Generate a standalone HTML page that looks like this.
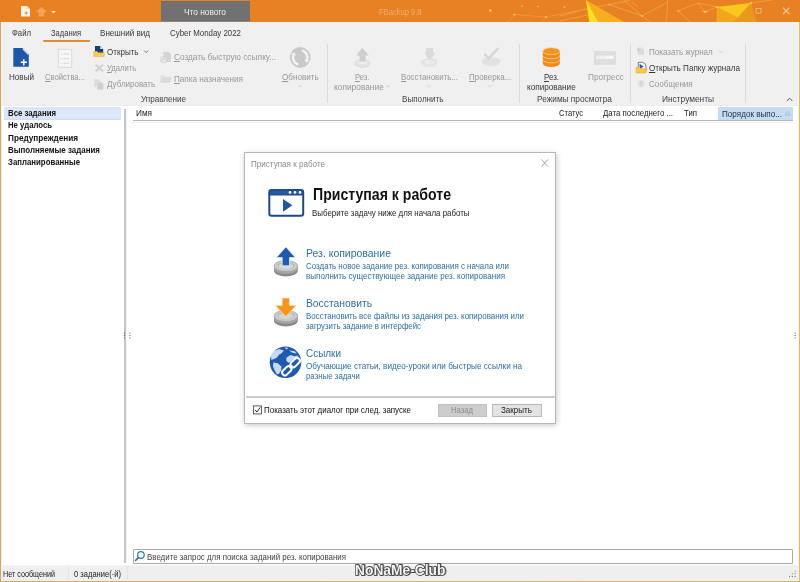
<!DOCTYPE html>
<html><head><meta charset="utf-8">
<style>
html,body{margin:0;padding:0;}
body{width:800px;height:582px;overflow:hidden;background:#fff;position:relative;font-family:"Liberation Sans",sans-serif;font-size:10px;color:#222;}
.a{position:absolute;}
.t{position:absolute;white-space:nowrap;transform-origin:0 50%;}
svg{position:absolute;overflow:visible;}
u{text-decoration:underline;text-underline-offset:1px;text-decoration-thickness:0.8px;}
</style></head><body>
<!-- TITLE BAR -->
<div class="a" style="left:0;top:0;width:800px;height:22px;background:#E78123;"></div>
<svg style="left:0;top:0" width="800" height="22" viewBox="0 0 800 22">
 <g fill="none" stroke="#F7AE52" stroke-width="0.7" opacity="0.9">
  <path d="M514.4 14.5 L508 22 M514.4 14.5 L546 17 L586 9 M546 17 L541 22" opacity="0.7"/>
  <path d="M560 16 L586 9 L612 4 L630 0.5"/>
  <path d="M560 21 L588 15"/>
  <path d="M609 4.5 L642 16 L668 2"/>
  <path d="M624 0 L642 16 L650 22"/>
  <path d="M668 0 L666 22"/>
  <path d="M632 2 L638 7"/>
  <path d="M678 11 L698 3 L717 7"/>
  <path d="M678 11 L690 22"/>
  <path d="M698 3 L705 12 L717 7"/>
  <path d="M751 3 L772 0"/>
 </g>
 <polygon points="586,0 624,22 589,22" fill="#F6AE1F"/>
 <polygon points="586,0 598,22 589.5,22" fill="#FCDF22"/>
 <polygon points="717,7 751,3 756,22 716.5,22" fill="#F3A51F"/>
 <polygon points="717,7 751,3 738,17.5" fill="#F8C81E"/>
 <polygon points="738,17.5 751,3 756,22 733,22" fill="#EA981E"/>
 <g fill="#F9D15B">
  <circle cx="490.4" cy="10.5" r="1.2"/><circle cx="717" cy="7" r="1"/><circle cx="751" cy="3" r="1.1"/>
  <circle cx="642" cy="16" r="0.9"/><circle cx="705" cy="12" r="0.9"/><circle cx="564.5" cy="7" r="0.8"/>
  <circle cx="522" cy="6" r="0.8"/><circle cx="538" cy="6.5" r="0.8"/><circle cx="514.4" cy="14.5" r="0.9"/><circle cx="546" cy="17" r="0.9"/>
  <circle cx="609" cy="4.5" r="0.7"/><circle cx="678" cy="11" r="0.7"/>
 </g>
 <!-- window controls -->
 <g fill="none" stroke="#F5CDA3" stroke-width="0.9">
  <rect x="756" y="8.5" width="5" height="4.5" opacity="0.75"/>
  <path d="M783 7.7 L789.4 14.1 M789.4 7.7 L783 14.1" stroke-width="1.1"/>
  <path d="M702 11.5 H708" opacity="0.5"/>
 </g>
 <!-- quick access icons -->
 <path d="M21 6 H27 L30 9 V16.5 H21 Z" fill="#FBF3DC"/>
 <path d="M27 6 V9 H30 Z" fill="#EAD9B0"/>
 <path d="M26.2 11.5 v3 M24.7 13 h3" stroke="#8a8470" stroke-width="0.8" fill="none"/>
 <path d="M41.5 6.8 L47.2 12.3 H44.3 V16.4 H38.7 V12.3 H35.8 Z" fill="#F4A25A"/>
 <path d="M51 11 H56 L53.5 13.5 Z" fill="#FBE3C3"/>
</svg>
<div class="a" style="left:161px;top:1.4px;width:89px;height:20.6px;background:#717171;"></div>
<!-- RIBBON BG -->
<div class="a" style="left:0;top:21.6px;width:800px;height:84.4px;background:#F0F0F0;"></div>
<div class="a" style="left:0;top:21.6px;width:800px;height:0.9px;background:#FAF1E6;"></div>
<div class="a" style="left:0;top:104.5px;width:800px;height:1.5px;background:linear-gradient(#F0F0F0,#E9E9E9);"></div>
<div class="a" style="left:161px;top:21px;width:89px;height:1.2px;background:#868686;"></div>
<div class="a" style="left:42.7px;top:39.8px;width:47.7px;height:1.9px;background:#E58A34;border-radius:1px;"></div>
<!-- group separators -->
<div class="a" style="left:326.5px;top:44px;width:1px;height:59px;background:#DADADA;"></div>
<div class="a" style="left:519px;top:44px;width:1px;height:59px;background:#DADADA;"></div>
<div class="a" style="left:630px;top:44px;width:1px;height:59px;background:#DADADA;"></div>
<div class="a" style="left:745px;top:44px;width:1px;height:59px;background:#DADADA;"></div>
<svg style="left:0;top:0" width="800" height="582" viewBox="0 0 800 582">
 <!-- Новый -->
 <path d="M13.3 48 H22.6 L28.8 54.2 V66.8 H13.3 Z" fill="#1F57A6"/>
 <path d="M23 49.2 L27.9 54.1" stroke="#DCE6F4" stroke-width="1.1" stroke-linecap="round"/>
 <path d="M23.8 59.2 V65.4 M20.7 62.3 H26.9" stroke="#fff" stroke-width="1.5" fill="none"/>
 <g fill="#4C7BC0"><circle cx="14.9" cy="51" r="0.45"/><circle cx="14.9" cy="56" r="0.45"/><circle cx="14.9" cy="61" r="0.45"/><circle cx="14.9" cy="65" r="0.45"/></g>
 <!-- Свойства -->
 <rect x="58.3" y="49.3" width="13.4" height="18" fill="#F6F6F6" stroke="#D8D8D8" stroke-width="0.9"/>
 <g stroke="#D4D4D4" stroke-width="0.9" fill="none">
  <path d="M60.6 54 h1.6 M63.6 54 h5.6 M60.6 58.6 h1.6 M63.6 58.6 h5.6 M60.6 63.2 h1.6 M63.6 63.2 h5.6"/>
 </g>
 <!-- Открыть -->
 <path d="M95 46 H100.3 L103.2 48.9 V53 H95 Z" fill="#1B3E72"/>
 <path d="M100.3 46 L103.2 48.9 H100.3 Z" fill="#E9EEF5"/>
 <path d="M93.8 51.6 H97.2 L98.4 52.7 H104.3 V56.5 H93.8 Z" fill="#F6CC5B" stroke="#E2B13C" stroke-width="0.5"/>
 <path d="M144.2 50.6 L146.2 52.6 L148.2 50.6" stroke="#6a6a6a" stroke-width="0.9" fill="none"/>
 <!-- Удалить -->
 <path d="M95.6 64.8 L103 71.4 M103 64.8 L95.6 71.4" stroke="#D2D2D2" stroke-width="2.2" fill="none"/>
 <!-- Дублировать -->
 <path d="M94.2 79.2 H98.6 L100.4 81 V87 H94.2 Z" fill="#DCDCDC"/>
 <path d="M97 81.8 H101.2 L103.7 84.3 V89.7 H97 Z" fill="#D0D0D0" stroke="#F1F1F1" stroke-width="0.5"/>
 <!-- Создать быструю ссылку -->
 <path d="M163.5 51.7 H168.6 L171 54.1 V62 H163.5 Z" fill="#D5D5D5"/>
 <rect x="161" y="57" width="5.2" height="5.2" fill="#E9E9E9" stroke="#D0D0D0" stroke-width="0.7"/>
 <path d="M162.3 61 C162.4 59.2 163.2 58.6 164.8 58.6 M164 57.8 l0.9 0.8 l-0.9 0.8" stroke="#bdbdbd" stroke-width="0.6" fill="none"/>
 <!-- Папка назначения -->
 <path d="M160.3 75 H164.2 L165.3 76.2 H170 V82.8 H160.3 Z" fill="#E3E3E3"/>
 <path d="M161.8 77.8 H171.6 L170 82.8 H160.3 Z" fill="#DADADA"/>
 <!-- Обновить -->
 <circle cx="300.2" cy="57.5" r="10.4" fill="#C9C9C9"/>
 <g fill="none" stroke="#F3F3F3" stroke-width="2.6">
  <path d="M302.06 50.55 A7.2 7.2 0 0 1 306.97 59.96"/>
  <path d="M298.34 64.45 A7.2 7.2 0 0 1 293.43 55.04"/>
 </g>
 <path d="M306.01 62.59 L309.69 60.95 L304.24 58.97 Z" fill="#F3F3F3"/>
 <path d="M294.39 52.41 L290.71 54.05 L296.16 56.03 Z" fill="#F3F3F3"/>
 <path d="M298 85.2 L300 87 L302 85.2" stroke="#CFCFCF" stroke-width="0.8" fill="none"/>
 <!-- Рез. копирование (disabled) -->
 <ellipse cx="362.3" cy="63.4" rx="7.4" ry="3.7" fill="#E6E6E6" stroke="#DADADA" stroke-width="1.1"/>
 <ellipse cx="362.3" cy="62.4" rx="5.2" ry="2.3" fill="#EDEDED" stroke="#DEDEDE" stroke-width="0.8"/>
 <path d="M362.3 47.8 L368.9 55.5 H365.6 V61.4 H359.5 V55.5 H356 Z" fill="#CECECE"/>
 <path d="M386.2 85.2 L388.2 87 L390.2 85.2" stroke="#C4C4C4" stroke-width="0.8" fill="none"/>
 <!-- Восстановить (disabled) -->
 <ellipse cx="429.4" cy="63" rx="8.2" ry="4.5" fill="#E7E7E7"/>
 <ellipse cx="429.4" cy="62" rx="8.2" ry="4" fill="#E2E2E2"/>
 <ellipse cx="429.4" cy="62" rx="5.6" ry="2.4" fill="#EAEAEA"/>
 <path d="M426.2 48 H433 V52.5 H435.8 L429.7 60.7 L424 52.5 H426.2 Z" fill="#DADADA"/>
 <path d="M426.8 85.2 L428.8 87 L430.8 85.2" stroke="#D2D2D2" stroke-width="0.8" fill="none"/>
 <!-- Проверка (disabled) -->
 <ellipse cx="491" cy="62.4" rx="9.2" ry="4.2" fill="#E6E6E6"/>
 <ellipse cx="491" cy="61.2" rx="9.2" ry="4" fill="#E1E1E1"/>
 <path d="M484.4 54 L488.6 58.4 L498.4 48.2" stroke="#D6D6D6" stroke-width="2.4" fill="none"/>
 <path d="M487.8 85.2 L489.8 87 L491.8 85.2" stroke="#D2D2D2" stroke-width="0.8" fill="none"/>
 <!-- Рез. копирование (db orange) -->
 <g>
  <path d="M542.8 51.2 V63.6 A8.5 3.5 0 0 0 559.8 63.6 V51.2 Z" fill="#EF8A1B"/>
  <path d="M542.8 55.6 A8.5 3.2 0 0 0 559.8 55.6" stroke="#F9C88C" stroke-width="0.9" fill="none"/>
  <path d="M542.8 59.7 A8.5 3.2 0 0 0 559.8 59.7" stroke="#F9C88C" stroke-width="0.9" fill="none"/>
  <ellipse cx="551.3" cy="51.2" rx="8.5" ry="3.5" fill="#F7941E" stroke="#FBD3A0" stroke-width="0.8"/>
 </g>
 <!-- Прогресс -->
 <rect x="594" y="51" width="22" height="13.8" fill="#DEDEDE"/>
 <rect x="596" y="55.6" width="18" height="3.4" fill="#EFEFEF"/>
 <rect x="607" y="56.2" width="5.5" height="2.2" fill="#FAFAFA"/>
 <!-- Показать журнал -->
 <path d="M638 47.6 H642 L644 49.6 V55 H638 Z" fill="#DDDDDD"/>
 <path d="M636.2 50 L638.4 47.6 L640.6 50 H639.2 V52.4 H637.6 V50 Z" fill="#CFCFCF"/>
 <path d="M719.2 50.8 L721.1 52.6 L723 50.8" stroke="#C8C8C8" stroke-width="0.8" fill="none"/>
 <!-- Открыть папку журнала -->
 <path d="M638.3 62.3 H642.4 Q646 62.8 646 66.6 V70 H638.3 Z" fill="#fff" stroke="#5a5a5a" stroke-width="0.8"/>
 <path d="M639.6 63.8 L643.6 66.6 L639.6 69.4 Z" fill="#2E5FA5"/>
 <path d="M636.1 67.6 H639.8 L640.9 68.7 H646.9 L646 73 H636.1 Z" fill="#F6C944" stroke="#E5AE35" stroke-width="0.6"/>
 <!-- Сообщения -->
 <circle cx="641.1" cy="83.6" r="3.7" fill="#E1E1E1"/>
 <path d="M641.1 81.4 V84.3" stroke="#BEBEBE" stroke-width="0.9"/>
 <circle cx="641.1" cy="85.7" r="0.5" fill="#BEBEBE"/>
 <!-- collapse chevron -->
 <path d="M786.8 101 L789.6 98.2 L792.4 101" stroke="#5a5a5a" stroke-width="1" fill="none"/>
</svg>

<!-- MAIN -->
<div class="a" style="left:0;top:106px;width:800px;height:459px;background:#fff;"></div>
<!-- left panel selection -->
<div class="a" style="left:4px;top:107px;width:117px;height:12.6px;background:#DBE7F9;border-bottom:1px solid #CFDDF0;box-sizing:border-box;"></div>
<!-- left panel right border / splitter -->
<div class="a" style="left:124.4px;top:109px;width:1.3px;height:454px;background:#C6C6C6;"></div>
<div class="a" style="left:125.7px;top:109px;width:1.4px;height:454px;background:#F5F5F5;"></div>
<svg style="left:0;top:0" width="800" height="582" viewBox="0 0 800 582">
 <g fill="#555"><rect x="124.1" y="332.6" width="1" height="1"/><rect x="124.1" y="335" width="1" height="1"/><rect x="124.1" y="337.4" width="1" height="1"/>
 <rect x="129.4" y="332.6" width="1" height="1"/><rect x="129.4" y="335" width="1" height="1"/><rect x="129.4" y="337.4" width="1" height="1"/>
 <rect x="794.6" y="332.6" width="1" height="1"/><rect x="794.6" y="335" width="1" height="1"/><rect x="794.6" y="337.4" width="1" height="1"/></g>
</svg>
<!-- list header -->
<div class="a" style="left:717.5px;top:107px;width:75px;height:13.4px;background:#C6DDF1;"></div>
<div class="a" style="left:133px;top:120.2px;width:659.5px;height:1px;background:#B4B4B4;"></div>
<div class="a" style="left:133px;top:122.4px;width:659.5px;height:0.6px;background:#EFEFEF;"></div>
<svg style="left:0;top:0" width="800" height="582" viewBox="0 0 800 582">
 <path d="M787.5 111.2 L790 115.2 H785 Z" fill="none" stroke="#9DB4CD" stroke-width="0.7"/>
 <!-- search magnifier -->
 <circle cx="140.9" cy="555" r="3.3" fill="#F4FAFD" stroke="#337CA3" stroke-width="1.2"/>
 <path d="M138.4 557.6 L135.5 560.5" stroke="#2B6C8F" stroke-width="1.6" stroke-linecap="round"/>
 <!-- resize grip -->
 <g fill="#9a9a9a"><rect x="795" y="571" width="1" height="1"/><rect x="795" y="574" width="1" height="1"/><rect x="792" y="574" width="1" height="1"/><rect x="795" y="577" width="1" height="1"/><rect x="792" y="577" width="1" height="1"/><rect x="789" y="577" width="1" height="1"/></g>
</svg>
<!-- search box -->
<div class="a" style="left:132.5px;top:549.1px;width:660px;height:14.7px;border:1.2px solid #A9A9A9;box-sizing:border-box;border-radius:1px;"></div>

<!-- STATUS -->
<div class="a" style="left:0;top:564.6px;width:800px;height:17.4px;background:#EFEFEF;"></div>
<div class="a" style="left:0;top:564.6px;width:800px;height:1.4px;background:linear-gradient(#F8F8F8,#EFEFEF);"></div>
<!-- DIALOG -->
<div class="a" style="left:244.2px;top:152px;width:311.8px;height:271.8px;background:#fff;border:1.4px solid #B7B7B7;box-sizing:border-box;box-shadow:1px 1.5px 5px rgba(0,0,0,0.17), 0 0 8px rgba(0,0,0,0.06);"></div>
<div class="a" style="left:245.6px;top:396.3px;width:309px;height:1.3px;background:#CCCCCC;"></div>
<!-- buttons -->
<div class="a" style="left:437.5px;top:403.9px;width:49.5px;height:12.8px;background:#CDCDCD;border:1px solid #C0C0C0;box-sizing:border-box;"></div>
<div class="a" style="left:492px;top:403.9px;width:49.6px;height:12.8px;background:#E3E3E3;border:1px solid #B9B9B9;box-sizing:border-box;"></div>
<svg style="left:0;top:0" width="800" height="582" viewBox="0 0 800 582">
 <!-- close X -->
 <path d="M541.3 159.4 L548 166.6 M548 159.4 L541.3 166.6" stroke="#9a9a9a" stroke-width="0.9" fill="none"/>
 <!-- checkbox -->
 <rect x="253.4" y="405.9" width="8" height="8" fill="#fff" stroke="#4a4a4a" stroke-width="0.9"/>
 <path d="M255 409.8 L256.9 412 L260.2 407.4" stroke="#2a2a2a" stroke-width="1" fill="none"/>
 <!-- header icon -->
 <rect x="269.3" y="190.1" width="33.9" height="25.6" rx="2.2" fill="#fff" stroke="#1F4B82" stroke-width="2"/>
 <path d="M269.3 195 V192.3 A2.2 2.2 0 0 1 271.5 190.1 H301 A2.2 2.2 0 0 1 303.2 192.3 V195 Z" fill="#2559A0" stroke="#1F4B82" stroke-width="1"/>
 <g fill="#fff"><circle cx="290" cy="192.4" r="1.3"/><circle cx="295" cy="192.4" r="1.3"/><circle cx="300" cy="192.4" r="1.3"/></g>
 <path d="M283 199 L292.4 205.3 L283 211.7 Z" fill="#1F57A2"/>
 <!-- item 1: backup -->
 <g>
  <path d="M274 266 V270.8 A11.9 5.6 0 0 0 297.8 270.8 V266 Z" fill="#8A8A8A"/>
  <path d="M274 266 V268.2 A11.9 5.6 0 0 0 297.8 268.2 V266 Z" fill="#A6A6A6"/>
  <ellipse cx="285.9" cy="266" rx="11.9" ry="5.6" fill="#CBCBCB" stroke="#9A9A9A" stroke-width="0.6"/>
  <ellipse cx="285.9" cy="265.8" rx="8.6" ry="3.8" fill="#B9B9B9"/>
  <ellipse cx="285.9" cy="266.2" rx="7.4" ry="3" fill="#D6D6D6"/>
  <path d="M285.9 246.9 L295.4 257.6 H289.5 V265.8 H282.2 V257.6 H276.4 Z" fill="#1F5BAA" stroke="#E4ECF7" stroke-width="0.8" stroke-linejoin="round"/>
 </g>
 <!-- item 2: restore -->
 <g>
  <path d="M274 316 V320.8 A11.9 5.6 0 0 0 297.8 320.8 V316 Z" fill="#8A8A8A"/>
  <path d="M274 316 V318.2 A11.9 5.6 0 0 0 297.8 318.2 V316 Z" fill="#A6A6A6"/>
  <ellipse cx="285.9" cy="316" rx="11.9" ry="5.6" fill="#CBCBCB" stroke="#9A9A9A" stroke-width="0.6"/>
  <ellipse cx="285.9" cy="315.8" rx="8.6" ry="3.8" fill="#B9B9B9"/>
  <ellipse cx="285.9" cy="316.2" rx="7.4" ry="3" fill="#D6D6D6"/>
  <path d="M282.2 298 H289.4 V305.4 H296.2 L285.8 316.8 L275.3 305.4 H282.2 Z" fill="#F7931E" stroke="#FCE1BD" stroke-width="0.8" stroke-linejoin="round"/>
 </g>
 <!-- item 3: links globe -->
 <g>
  <circle cx="285.5" cy="362.3" r="15.8" fill="#1F5BAA"/>
  <g fill="#C6DAF2">
  <path d="M271 355.3 L273.6 351.3 L279 349 L283.9 350.4 L281.6 353.2 L279.2 354.5 L277 357.5 L273.9 359 L271.3 359.9 Z"/>
  <path d="M284.5 347.4 L288.5 347.8 L286.6 349.6 Z"/>
  <path d="M289 350.4 L294.4 351 L296.8 353.4 L293 353 Z"/>
  <path d="M286.6 357.4 L290.5 355 L294.4 356.2 L297.4 355.4 L298.6 357.4 L293 359.2 L290.6 362 L288.2 362.8 L286.2 360.4 Z"/>
  <path d="M273.3 362.6 L277.7 363.3 L281.5 366.4 L281.1 370.2 L279.2 373.4 L276.9 374.6 L274.6 370.3 L273 366.5 Z"/>
  </g>
  <g fill="none" stroke="#1F5BAA" stroke-width="5" stroke-linecap="round">
   <path d="M284.6 373 L289 368.6"/><path d="M292.8 364.8 L297.4 360.2"/>
  </g>
  <g fill="none" stroke="#fff" stroke-width="2">
   <rect x="-5.4" y="-2.8" width="10.8" height="5.6" rx="2.8" transform="translate(286.8 370.8) rotate(-44)"/>
   <rect x="-5.4" y="-2.8" width="10.8" height="5.6" rx="2.8" transform="translate(295.2 362.6) rotate(-44)"/>
  </g>
  <path d="M289.6 368 L292.4 365.3" stroke="#fff" stroke-width="1.8"/>
 </g>
</svg>

<div class="a" style="left:0;top:0;width:800px;height:582px;will-change:transform;">
<div class="t" style="left:184px;top:6.11px;font-size:9.5px;line-height:12px;color:#f2f2f2;transform:scaleX(0.8787);">Что нового</div>
<div class="t" style="left:379px;top:6.11px;font-size:9.5px;line-height:12px;color:#F2AE74;transform:scaleX(0.7967);">FBackup 9.8</div>
<div class="t" style="left:12px;top:26.61px;font-size:9.5px;line-height:12px;color:#383838;transform:scaleX(0.8134);">Файл</div>
<div class="t" style="left:51px;top:26.61px;font-size:9.5px;line-height:12px;color:#383838;transform:scaleX(0.7990);">Задания</div>
<div class="t" style="left:100px;top:26.61px;font-size:9.5px;line-height:12px;color:#383838;transform:scaleX(0.8490);">Внешний вид</div>
<div class="t" style="left:170px;top:26.61px;font-size:9.5px;line-height:12px;color:#383838;transform:scaleX(0.8298);">Cyber Monday 2022</div>
<div class="t" style="left:9px;top:70.81px;font-size:9.5px;line-height:12px;color:#383838;transform:scaleX(0.8524);">Новый</div>
<div class="t" style="left:45px;top:70.81px;font-size:9.5px;line-height:12px;color:#989898;transform:scaleX(0.8055);"><u>С</u>войства...</div>
<div class="t" style="left:106.8px;top:45.51px;font-size:9.5px;line-height:12px;color:#383838;transform:scaleX(0.8442);">Открыть</div>
<div class="t" style="left:106.8px;top:62.11px;font-size:9.5px;line-height:12px;color:#989898;transform:scaleX(0.8048);"><u>У</u>далить</div>
<div class="t" style="left:106.8px;top:77.81px;font-size:9.5px;line-height:12px;color:#989898;transform:scaleX(0.8417);"><u>Д</u>ублировать</div>
<div class="t" style="left:173.8px;top:50.61px;font-size:9.5px;line-height:12px;color:#989898;transform:scaleX(0.8668);"><u>С</u>оздать быструю ссылку...</div>
<div class="t" style="left:173.5px;top:72.61px;font-size:9.5px;line-height:12px;color:#989898;transform:scaleX(0.8563);"><u>П</u>апка назначения</div>
<div class="t" style="left:282px;top:70.81px;font-size:9.5px;line-height:12px;color:#989898;transform:scaleX(0.8555);"><u>О</u>бновить</div>
<div class="t" style="left:141px;top:92.91px;font-size:9.5px;line-height:12px;color:#444444;transform:scaleX(0.8521);">Управление</div>
<div class="t" style="left:354.5px;top:70.81px;font-size:9.5px;line-height:12px;color:#989898;transform:scaleX(0.8056);"><u>Р</u>ез.</div>
<div class="t" style="left:334px;top:80.71px;font-size:9.5px;line-height:12px;color:#989898;transform:scaleX(0.8795);">копирование</div>
<div class="t" style="left:400.7px;top:70.81px;font-size:9.5px;line-height:12px;color:#989898;transform:scaleX(0.8274);"><u>В</u>осстановить...</div>
<div class="t" style="left:469px;top:70.81px;font-size:9.5px;line-height:12px;color:#989898;transform:scaleX(0.8381);"><u>П</u>роверка...</div>
<div class="t" style="left:401.5px;top:92.91px;font-size:9.5px;line-height:12px;color:#444444;transform:scaleX(0.8507);">Выполнить</div>
<div class="t" style="left:544px;top:70.81px;font-size:9.5px;line-height:12px;color:#383838;transform:scaleX(0.8333);"><u>Р</u>ез.</div>
<div class="t" style="left:527.3px;top:80.71px;font-size:9.5px;line-height:12px;color:#383838;transform:scaleX(0.8600);">копирование</div>
<div class="t" style="left:587.5px;top:70.81px;font-size:9.5px;line-height:12px;color:#989898;transform:scaleX(0.8721);">Прогресс</div>
<div class="t" style="left:537px;top:92.91px;font-size:9.5px;line-height:12px;color:#444444;transform:scaleX(0.8735);">Режимы просмотра</div>
<div class="t" style="left:649.3px;top:45.61px;font-size:9.5px;line-height:12px;color:#989898;transform:scaleX(0.8437);">Показать журнал</div>
<div class="t" style="left:649px;top:61.71px;font-size:9.5px;line-height:12px;color:#383838;transform:scaleX(0.8536);"><u>О</u>ткрыть Папку журнала</div>
<div class="t" style="left:649.3px;top:77.91px;font-size:9.5px;line-height:12px;color:#989898;transform:scaleX(0.8475);">Сообщения</div>
<div class="t" style="left:662px;top:92.91px;font-size:9.5px;line-height:12px;color:#444444;transform:scaleX(0.8776);">Инструменты</div>
<div class="t" style="left:8px;top:107.21px;font-size:9.5px;line-height:12px;color:#111111;font-weight:bold;transform:scaleX(0.8220);">Все задания</div>
<div class="t" style="left:8px;top:119.41px;font-size:9.5px;line-height:12px;color:#111111;font-weight:bold;transform:scaleX(0.8169);">Не удалось</div>
<div class="t" style="left:8px;top:131.61px;font-size:9.5px;line-height:12px;color:#111111;font-weight:bold;transform:scaleX(0.8619);">Предупреждения</div>
<div class="t" style="left:8px;top:144.11px;font-size:9.5px;line-height:12px;color:#111111;font-weight:bold;transform:scaleX(0.8353);">Выполняемые задания</div>
<div class="t" style="left:8px;top:155.91px;font-size:9.5px;line-height:12px;color:#111111;font-weight:bold;transform:scaleX(0.8242);">Запланированные</div>
<div class="t" style="left:136px;top:107.11px;font-size:9.5px;line-height:12px;color:#222222;transform:scaleX(0.8641);">Имя</div>
<div class="t" style="left:559px;top:107.11px;font-size:9.5px;line-height:12px;color:#222222;transform:scaleX(0.7992);">Статус</div>
<div class="t" style="left:603px;top:107.11px;font-size:9.5px;line-height:12px;color:#222222;transform:scaleX(0.8269);">Дата последнего ...</div>
<div class="t" style="left:684px;top:107.11px;font-size:9.5px;line-height:12px;color:#222222;transform:scaleX(0.8205);">Тип</div>
<div class="t" style="left:722.3px;top:107.51px;font-size:9.5px;line-height:12px;color:#1c2b40;transform:scaleX(0.8537);">Порядок выпо...</div>
<div class="t" style="left:147px;top:550.61px;font-size:9.5px;line-height:12px;color:#444;transform:scaleX(0.8319);">Введите запрос для поиска заданий рез. копирования</div>
<div class="t" style="left:2.5px;top:567.81px;font-size:9.5px;line-height:12px;color:#222;transform:scaleX(0.7586);">Нет сообщений</div>
<div class="t" style="left:74px;top:567.81px;font-size:9.5px;line-height:12px;color:#222;transform:scaleX(0.7962);">0 задание(-й)</div>
<div class="t" style="left:251px;top:157.81px;font-size:9.5px;line-height:12px;color:#8a8a8a;transform:scaleX(0.8506);">Приступая к работе</div>
<div class="t" style="left:312.5px;top:183.56px;font-size:16px;line-height:21px;color:#111;font-weight:bold;transform:scaleX(0.8812);">Приступая к работе</div>
<div class="t" style="left:312px;top:206.61px;font-size:9.5px;line-height:12px;color:#222;transform:scaleX(0.8328);">Выберите задачу ниже для начала работы</div>
<div class="t" style="left:306px;top:246.39px;font-size:11px;line-height:14px;color:#2F6F9F;transform:scaleX(0.9502);">Рез. копирование</div>
<div class="t" style="left:306px;top:259.71px;font-size:9.5px;line-height:12px;color:#2F6F9F;transform:scaleX(0.8352);">Создать новое задание рез. копирования с начала или</div>
<div class="t" style="left:306px;top:269.91px;font-size:9.5px;line-height:12px;color:#2F6F9F;transform:scaleX(0.8476);">выполнить существующее задание рез. копирования</div>
<div class="t" style="left:306px;top:296.39px;font-size:11px;line-height:14px;color:#2F6F9F;transform:scaleX(0.9370);">Восстановить</div>
<div class="t" style="left:306px;top:309.81px;font-size:9.5px;line-height:12px;color:#2F6F9F;transform:scaleX(0.8356);">Восстановить все файлы из задания рез. копирования или</div>
<div class="t" style="left:306px;top:319.91px;font-size:9.5px;line-height:12px;color:#2F6F9F;transform:scaleX(0.8226);">загрузить задание в интерфейс</div>
<div class="t" style="left:306px;top:346.39px;font-size:11px;line-height:14px;color:#2F6F9F;transform:scaleX(0.9036);">Ссылки</div>
<div class="t" style="left:306px;top:359.81px;font-size:9.5px;line-height:12px;color:#2F6F9F;transform:scaleX(0.8593);">Обучающие статьи, видео-уроки или быстрые ссылки на</div>
<div class="t" style="left:306px;top:370.31px;font-size:9.5px;line-height:12px;color:#2F6F9F;transform:scaleX(0.8266);">разные задачи</div>
<div class="t" style="left:264px;top:404.11px;font-size:9.5px;line-height:12px;color:#111;transform:scaleX(0.8379);">Показать этот диалог при след. запуске</div>
<div class="t" style="left:451px;top:404.11px;font-size:9.5px;line-height:12px;color:#8c8c8c;transform:scaleX(0.8078);">Назад</div>
<div class="t" style="left:501px;top:404.11px;font-size:9.5px;line-height:12px;color:#222;transform:scaleX(0.8471);">Закрыть</div>
<svg style="left:0;top:0" width="800" height="582" viewBox="0 0 800 582">
 <!-- resize grip -->
 <g><rect x="794.6" y="570.6" width="1.2" height="1.2" fill="#ABABAB"/><rect x="794.6" y="573.1" width="1.2" height="1.2" fill="#9A9A9A"/><rect x="791.8" y="573.1" width="1.2" height="1.2" fill="#A2A2A2"/><rect x="794.6" y="575.9" width="1.2" height="1.2" fill="#808080"/><rect x="791.8" y="575.9" width="1.2" height="1.2" fill="#808080"/><rect x="789" y="575.9" width="1.2" height="1.2" fill="#909090"/></g>
 <!-- status separators -->
 <path d="M68.5 566.5 V579.5 M127.5 566.5 V579.5" stroke="#E5E5E5" stroke-width="1"/>
</svg>
<!-- watermark -->
<div class="a wm" style="left:355.9px;top:560.3px;height:20px;line-height:20px;font-weight:bold;font-size:14px;white-space:nowrap;color:#777;-webkit-text-stroke:1.3px #777;paint-order:stroke fill;transform-origin:0 50%;transform:scaleX(0.985);">NoNaMe-Club</div>
<div class="a wm" style="left:355.2px;top:559.6px;height:20px;line-height:20px;font-weight:bold;font-size:14px;white-space:nowrap;color:#F6F6F6;-webkit-text-stroke:1.3px #303030;paint-order:stroke fill;transform-origin:0 50%;transform:scaleX(0.985);">NoNaMe-Club</div>

</div>
<!-- window borders -->
<div class="a" style="left:0;top:21.6px;width:0.9px;height:561px;background:#CDA770;"></div>
<div class="a" style="left:0.9px;top:22.4px;width:0.8px;height:558px;background:#FBF2E1;"></div>
<div class="a" style="left:797.6px;top:22.4px;width:1.2px;height:558px;background:#FBF4D8;"></div>
<div class="a" style="left:798.8px;top:21.6px;width:1.2px;height:561px;background:#D0C074;"></div>
<div class="a" style="left:0.9px;top:579.6px;width:798px;height:1.2px;background:#FBF1DF;"></div>
<div class="a" style="left:0;top:580.8px;width:800px;height:1.2px;background:linear-gradient(90deg,#D3A775,#D2AE73 60%,#CBB96C);"></div>

</body></html>
